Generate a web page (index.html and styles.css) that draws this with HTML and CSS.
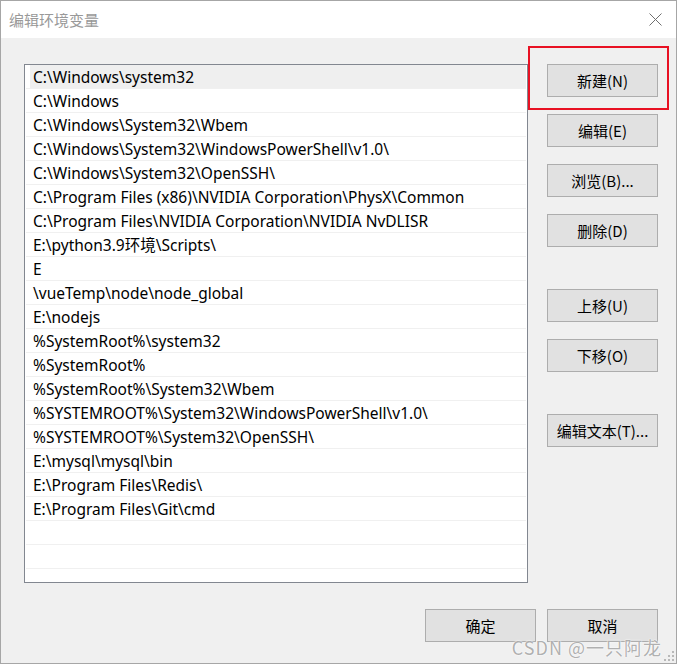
FILE: index.html
```html
<!DOCTYPE html>
<html lang="zh-CN">
  <head>
    <meta charset="UTF-8" />
    <meta name="viewport" content="width=device-width, initial-scale=1.0" />
    <title>编辑环境变量</title>
    <link rel="stylesheet" href="styles.css">
  </head>
  <body>
    <div class="window">
      <div class="titlebar">
        <span class="title">编辑环境变量</span>
        <svg class="close" width="13" height="13" viewBox="0 0 13 13">
          <path d="M0.5 0.5 L12.5 12.5 M12.5 0.5 L0.5 12.5" stroke="#6f6f6f" stroke-width="1" fill="none" />
        </svg>
      </div>

      <div class="content">
        <div class="main">
          <div class="list">
            <div class="row selected"><div class="cell">C:\Windows\system32</div></div>
            <div class="row"><div class="cell">C:\Windows</div></div>
            <div class="row"><div class="cell">C:\Windows\System32\Wbem</div></div>
            <div class="row"><div class="cell">C:\Windows\System32\WindowsPowerShell\v1.0\</div></div>
            <div class="row"><div class="cell">C:\Windows\System32\OpenSSH\</div></div>
            <div class="row"><div class="cell">C:\Program Files (x86)\NVIDIA Corporation\PhysX\Common</div></div>
            <div class="row"><div class="cell">C:\Program Files\NVIDIA Corporation\NVIDIA NvDLISR</div></div>
            <div class="row"><div class="cell">E:\python3.9环境\Scripts\</div></div>
            <div class="row"><div class="cell">E</div></div>
            <div class="row"><div class="cell">\vueTemp\node\node_global</div></div>
            <div class="row"><div class="cell">E:\nodejs</div></div>
            <div class="row"><div class="cell">%SystemRoot%\system32</div></div>
            <div class="row"><div class="cell">%SystemRoot%</div></div>
            <div class="row"><div class="cell">%SystemRoot%\System32\Wbem</div></div>
            <div class="row"><div class="cell">%SYSTEMROOT%\System32\WindowsPowerShell\v1.0\</div></div>
            <div class="row"><div class="cell">%SYSTEMROOT%\System32\OpenSSH\</div></div>
            <div class="row"><div class="cell">E:\mysql\mysql\bin</div></div>
            <div class="row"><div class="cell">E:\Program Files\Redis\</div></div>
            <div class="row"><div class="cell">E:\Program Files\Git\cmd</div></div>
            <div class="row"><div class="cell"></div></div>
            <div class="row"><div class="cell"></div></div>
            <div class="row"><div class="cell"></div></div>
          </div>

          <div class="side">
            <div class="mark"></div>
            <button class="btn">新建(N)</button>
            <button class="btn">编辑(E)</button>
            <button class="btn">浏览(B)...</button>
            <button class="btn">删除(D)</button>
            <button class="btn group">上移(U)</button>
            <button class="btn">下移(O)</button>
            <button class="btn group">编辑文本(T)...</button>
          </div>
        </div>

        <div class="footer">
          <button class="btn">确定</button>
          <button class="btn">取消</button>
        </div>

        <div class="watermark">CSDN @一只阿龙</div>
        <svg class="grip" width="12" height="12" viewBox="0 0 12 12">
          <rect x="9" y="1" width="2" height="2" fill="#b8b8b8" />
          <rect x="5" y="5" width="2" height="2" fill="#b8b8b8" />
          <rect x="9" y="5" width="2" height="2" fill="#b8b8b8" />
          <rect x="1" y="9" width="2" height="2" fill="#b8b8b8" />
          <rect x="5" y="9" width="2" height="2" fill="#b8b8b8" />
          <rect x="9" y="9" width="2" height="2" fill="#b8b8b8" />
        </svg>
      </div>
    </div>
  </body>
</html>
```

FILE: styles.css
```css
html,
body {
  margin: 0;
  padding: 0;
}

body {
  font-family: "Noto Sans", "Noto Sans CJK SC", sans-serif;
  font-size: 15px;
  color: #000;
  background: #f0f0f0;
}

.window {
  width: 677px;
  height: 664px;
  box-sizing: border-box;
  border: 1px solid #a6a6a6;
  display: flex;
  flex-direction: column;
  overflow: hidden;
}

.titlebar {
  height: 37px;
  background: #fff;
  display: flex;
  align-items: center;
  justify-content: space-between;
  padding: 0 14px 0 8px;
  flex-shrink: 0;
}

.title {
  color: #999;
  font-family: "Noto Sans CJK SC", sans-serif;
  font-size: 15px;
}

.content {
  flex: 1;
  position: relative;
  background: #f0f0f0;
  padding: 26px 18px 0 23px;
}

.main {
  display: flex;
  gap: 19px;
}

.list {
  width: 504px;
  height: 519px;
  box-sizing: border-box;
  border: 1px solid #828790;
  background: #fff;
  overflow: hidden;
}

.row {
  border-bottom: 1px solid #f0f0f0;
  margin: 0 1px;
}

.cell {
  height: 23px;
  line-height: 25px;
  margin-left: 4px;
  padding-left: 3px;
  font-size: 15.5px;
  white-space: nowrap;
}

.selected .cell {
  background: #efefef;
}

.side {
  position: relative;
  display: flex;
  flex-direction: column;
  gap: 17px;
}

.btn {
  width: 111px;
  height: 33px;
  box-sizing: border-box;
  border: 1px solid #adadad;
  background: #e1e1e1;
  font-family: "Noto Sans CJK SC", sans-serif;
  font-size: 15px;
  color: #000;
  padding: 0;
}

.side .group {
  margin-top: 25px;
}

/* red highlight drawn round the first button */
.mark {
  position: absolute;
  left: -19px;
  top: -18px;
  width: 141px;
  height: 64px;
  box-sizing: border-box;
  border: 2px solid #e81123;
}

.footer {
  display: flex;
  justify-content: flex-end;
  gap: 11px;
  margin-top: 26px;
}

.watermark {
  position: absolute;
  right: 14px;
  bottom: 7px;
  font-family: "Noto Sans CJK SC", sans-serif;
  font-size: 18px;
  line-height: 18px;
  color: rgba(150, 150, 150, 0.75);
  text-shadow: 0 0 2px #fff, 0 0 1px #fff;
  letter-spacing: 1px;
}

.grip {
  position: absolute;
  right: 1px;
  bottom: 1px;
}
```
